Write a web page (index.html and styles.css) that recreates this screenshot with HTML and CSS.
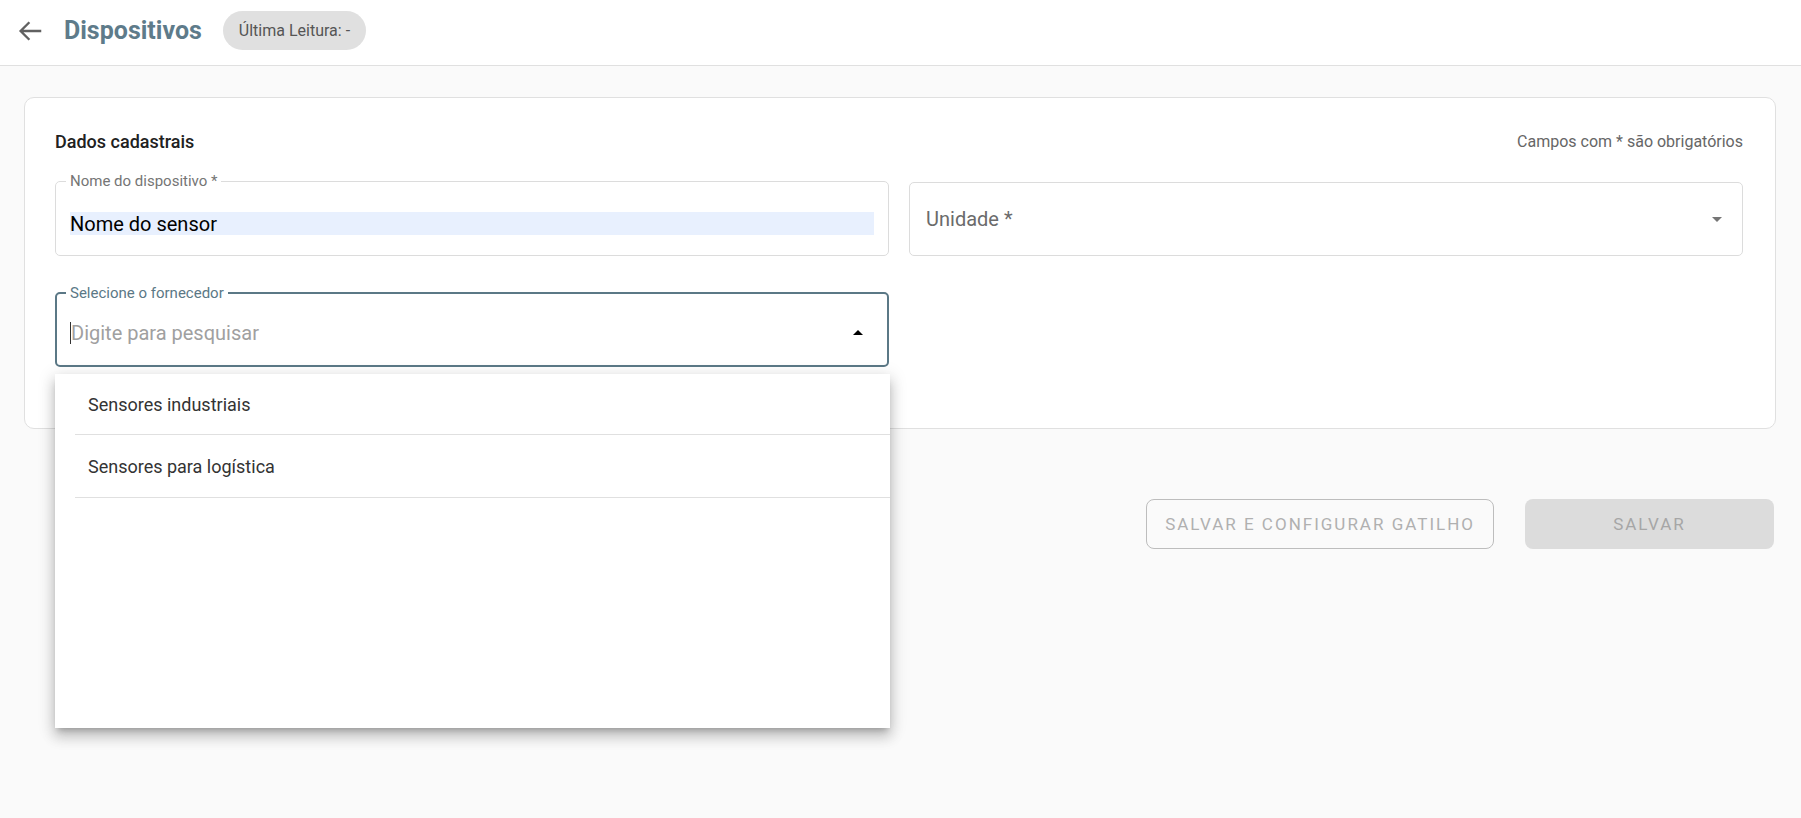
FILE: index.html
```html
<!DOCTYPE html>
<html lang="pt-BR">
<head>
  <meta charset="UTF-8">
  <title>Dispositivos</title>
  <link rel="stylesheet" href="styles.css">
</head>
<body>

  <!-- Barra superior -->
  <header class="topbar">
    <button class="back-btn" aria-label="Voltar">
      <svg viewBox="0 0 24 24" width="30" height="30">
        <path d="M21 12H4.5M11.5 5L4.5 12l7 7" fill="none" stroke="#616161" stroke-width="1.9" stroke-linecap="butt" stroke-linejoin="miter"/>
      </svg>
    </button>
    <h1 class="page-title">Dispositivos</h1>
    <span class="chip">Última Leitura: -</span>
  </header>

  <main class="content">

    <!-- Formulário -->
    <section class="card">
      <div class="card-header">
        <h2>Dados cadastrais</h2>
        <span class="hint">Campos com * são obrigatórios</span>
      </div>

      <div class="form-grid">
        <fieldset class="field">
          <legend>Nome do dispositivo *</legend>
          <input class="autofilled" type="text" value="Nome do sensor">
        </fieldset>

        <div class="field field-select">
          <span class="select-value">Unidade *</span>
          <svg class="caret" viewBox="0 0 10 5" width="10" height="5"><path d="M0 0h10L5 5z" fill="#757575"/></svg>
        </div>

        <div class="combo">
          <fieldset class="field field-focused">
            <legend>Selecione o fornecedor</legend>
            <div class="combo-row">
              <span class="text-cursor"></span>
              <input type="text" placeholder="Digite para pesquisar">
              <svg class="caret" viewBox="0 0 10 5" width="10" height="5"><path d="M0 5h10L5 0z" fill="#000"/></svg>
            </div>
          </fieldset>

          <ul class="dropdown">
            <li>Sensores industriais</li>
            <li>Sensores para logística</li>
          </ul>
        </div>
      </div>
    </section>

    <!-- Ações -->
    <div class="actions">
      <button class="btn btn-outline" disabled>Salvar e configurar gatilho</button>
      <button class="btn btn-filled" disabled>Salvar</button>
    </div>

  </main>

</body>
</html>
```

FILE: styles.css
```css
html, body {
  min-height: 100vh;
}

body {
  margin: 0;
  font-family: Roboto, "Liberation Sans", sans-serif;
  background-color: #fafafa;
  color: #212121;
}

.topbar {
  height: 61px;
  padding: 0 0 4px 15px;
  display: flex;
  align-items: center;
  background-color: #fff;
  border-bottom: 1px solid #e0e0e0;
}

.back-btn {
  width: 30px;
  height: 30px;
  padding: 0;
  border: none;
  background: none;
  display: flex;
  cursor: pointer;
}

.page-title {
  margin: 0 0 0 19px;
  font-size: 25px;
  font-weight: 700;
  color: #5e7b8a;
}

.chip {
  margin-left: 21px;
  height: 39px;
  padding: 0 16px;
  display: flex;
  align-items: center;
  border-radius: 20px;
  background-color: #e0e0e0;
  color: #555;
  font-size: 16px;
}

.content {
  padding: 31px 25px 0 24px;
}

.card {
  background-color: #fff;
  border: 1px solid #e0e0e0;
  border-radius: 10px;
  padding: 31px 32px 61px 30px;
}

.card-header {
  display: flex;
  justify-content: space-between;
  align-items: center;
  height: 24px;
  margin-bottom: 20px;
}

.card-header h2 {
  margin: 0;
  font-size: 18px;
  font-weight: 500;
  color: #212121;
}

.hint {
  font-size: 16px;
  color: #666;
}

.form-grid {
  display: grid;
  grid-template-columns: 1fr 1fr;
  column-gap: 20px;
  row-gap: 29px;
  align-items: end;
}

.field {
  margin: 0;
  min-width: 0;
  border: 1px solid #dcdcdc;
  border-radius: 5px;
  padding: 23px 14px 20px;
  background-color: #fff;
}

.field legend {
  margin-left: -4px;
  padding: 0 4px;
  font-size: 15px;
  line-height: 16px;
  color: #757575;
}

.field input {
  display: block;
  width: 100%;
  height: 23px;
  padding: 0;
  border: none;
  outline: none;
  font-family: inherit;
  font-size: 20px;
  color: #000;
  background: transparent;
}

.field input.autofilled {
  background-color: #e8f0fe;
}

.field input::placeholder {
  color: #a0a0a0;
}

.field-select {
  box-sizing: border-box;
  height: 74px;
  padding: 0 20px 0 16px;
  display: flex;
  align-items: center;
  justify-content: space-between;
}

.select-value {
  font-size: 20px;
  color: #6b6b6b;
}

.combo {
  position: relative;
}

.field-focused {
  border: 2px solid #5b7886;
  padding: 20px 24px 21px 13px;
}

.field-focused legend {
  color: #5b7886;
}

.combo-row {
  display: flex;
  align-items: center;
}

.text-cursor {
  width: 1px;
  height: 22px;
  background-color: #333;
  flex-shrink: 0;
}

.combo-row input {
  flex: 1;
}

.dropdown {
  position: absolute;
  top: calc(100% + 7px);
  left: 0;
  width: calc(100% + 1px);
  height: 354px;
  margin: 0;
  padding: 0;
  list-style: none;
  background-color: #fff;
  box-shadow: 0 5px 6px -3px rgba(0,0,0,0.22), 0 9px 12px 1px rgba(0,0,0,0.15), 0 3px 16px 2px rgba(0,0,0,0.12);
  z-index: 10;
}

.dropdown li {
  height: 62px;
  margin-left: 20px;
  padding-left: 13px;
  display: flex;
  align-items: center;
  border-bottom: 1px solid #e0e0e0;
  font-size: 18px;
  color: #333;
}

.dropdown li:first-child {
  height: 60px;
}

.actions {
  display: flex;
  justify-content: flex-end;
  gap: 31px;
  margin-top: 70px;
  padding-right: 2px;
}

.btn {
  height: 50px;
  border-radius: 8px;
  font-family: inherit;
  font-size: 17px;
  font-weight: 400;
  letter-spacing: 2px;
  text-transform: uppercase;
}

.btn-outline {
  padding: 0 18px;
  background-color: transparent;
  border: 1px solid #bdbdbd;
  color: #b0b0b0;
}

.btn-filled {
  width: 249px;
  border: none;
  background-color: #dcdcdc;
  color: #a6a6a6;
}
```
